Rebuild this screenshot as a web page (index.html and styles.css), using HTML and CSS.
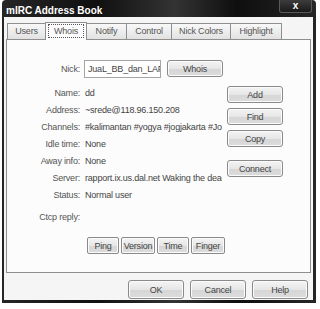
FILE: index.html
```html
<!DOCTYPE html>
<html>
<head>
    <title>mIRC Address Book</title>
    <link rel="stylesheet" href="styles.css">
</head>
<body>
    <div class="window">
        <div class="titlebar">
            <span class="title">mIRC Address Book</span>
            <div class="close-btn">x</div>
        </div>
        <div class="client">
            <div class="tabs">
                <div class="tab">Users</div>
                <div class="tab active"><span class="focus">Whois</span></div>
                <div class="tab">Notify</div>
                <div class="tab">Control</div>
                <div class="tab">Nick Colors</div>
                <div class="tab">Highlight</div>
            </div>
            <div class="panel">
                <div class="nick-row">
                    <span class="label">Nick:</span>
                    <div class="nick-input">JuaL_BB_dan_LAPTOP</div>
                    <button class="btn whois-btn">Whois</button>
                </div>
                <div class="info-area">
                    <div class="info">
                        <div class="row"><span class="label">Name:</span><span class="value">dd</span></div>
                        <div class="row"><span class="label">Address:</span><span class="value">~srede@118.96.150.208</span></div>
                        <div class="row"><span class="label">Channels:</span><span class="value">#kalimantan #yogya #jogjakarta #Jogja</span></div>
                        <div class="row"><span class="label">Idle time:</span><span class="value">None</span></div>
                        <div class="row"><span class="label">Away info:</span><span class="value">None</span></div>
                        <div class="row"><span class="label">Server:</span><span class="value">rapport.ix.us.dal.net Waking the dead</span></div>
                        <div class="row"><span class="label">Status:</span><span class="value">Normal user</span></div>
                    </div>
                    <div class="side-buttons">
                        <button class="btn">Add</button>
                        <button class="btn">Find</button>
                        <button class="btn">Copy</button>
                        <button class="btn connect-btn">Connect</button>
                    </div>
                </div>
                <div class="row ctcp-row"><span class="label">Ctcp reply:</span></div>
                <div class="ctcp-buttons">
                    <button class="btn small">Ping</button>
                    <button class="btn small">Version</button>
                    <button class="btn small">Time</button>
                    <button class="btn small">Finger</button>
                </div>
            </div>
            <div class="dialog-buttons">
                <button class="btn big">OK</button>
                <button class="btn big">Cancel</button>
                <button class="btn big">Help</button>
            </div>
        </div>
    </div>
</body>
</html>
```

FILE: styles.css
```css
body {
    margin: 0;
    background-color: #ffffff;
    font-family: "Liberation Sans", Arial, sans-serif;
    font-size: 9px;
    letter-spacing: -0.2px;
    color: #444444;
}

.window {
    width: 314px;
    height: 303px;
    margin-left: 2px;
    display: flex;
    flex-direction: column;
    background: linear-gradient(90deg, #262626 0%, #101010 30%, #333333 55%, #0e0e0e 75%, #262626 100%);
    border-radius: 4px 4px 0 0;
}

.titlebar {
    height: 17px;
    position: relative;
    display: flex;
    align-items: center;
    padding-left: 4px;
    padding-top: 3px;
    box-sizing: border-box;
}

.title {
    color: #ffffff;
    font-weight: bold;
    font-size: 10px;
    letter-spacing: 0;
}

.close-btn {
    position: absolute;
    top: 0;
    right: 4px;
    width: 31px;
    height: 12px;
    border: 1px solid #5a5a5a;
    border-top: none;
    border-radius: 0 0 3px 3px;
    background: linear-gradient(#3c3c3c, #1a1a1a);
    color: #ffffff;
    font-weight: bold;
    font-size: 10px;
    line-height: 11px;
    text-align: center;
}

.client {
    flex: 1;
    margin: 0 3px 3px 2px;
    background-color: #f5f5f5;
    display: flex;
    flex-direction: column;
}

.tabs {
    display: flex;
    margin-top: 6px;
    padding-left: 3px;
    height: 16px;
}

.tab {
    height: 16px;
    border: 1px solid #8f8f8f;
    border-bottom: none;
    margin-left: -1px;
    background: linear-gradient(#f8f8f8, #e2e2e2);
    color: #555555;
    text-align: center;
    line-height: 15px;
    box-sizing: border-box;
}

.tab:nth-child(1) { width: 39px; margin-left: 0; }
.tab:nth-child(2) { width: 42px; }
.tab:nth-child(3) { width: 41px; }
.tab:nth-child(4) { width: 46px; }
.tab:nth-child(5) { width: 60px; }
.tab:nth-child(6) { width: 52px; }

.tab.active {
    background: #fcfcfc;
    height: 18px;
    margin-top: -1px;
    position: relative;
    z-index: 1;
    padding: 1px 2px 0;
}

.focus {
    display: block;
    border: 1px dotted #555555;
    line-height: 12px;
}

.panel {
    margin-left: 2px;
    width: 305px;
    height: 234px;
    box-sizing: border-box;
    border: 1px solid #8f8f8f;
    background-color: #fcfcfc;
    padding-top: 20px;
}

.label {
    width: 73px;
    text-align: right;
    color: #555555;
    flex-shrink: 0;
}

.nick-row {
    display: flex;
    align-items: flex-start;
    height: 19px;
}

.nick-row .label {
    line-height: 19px;
}

.nick-input {
    margin-left: 4px;
    width: 77px;
    height: 18px;
    box-sizing: border-box;
    border: 1px solid #a5a5a5;
    background-color: #ffffff;
    padding: 0 3px;
    line-height: 16px;
    white-space: nowrap;
    overflow: hidden;
}

.btn {
    height: 17px;
    width: 56px;
    padding: 0;
    font-family: "Liberation Sans", Arial, sans-serif;
    font-size: 9px;
    letter-spacing: -0.2px;
    color: #444444;
    border: 1px solid #8a8a8a;
    border-radius: 3px;
    background: linear-gradient(#f4f4f4 0%, #e6e6e6 50%, #d6d6d6 51%, #dcdcdc 100%);
    box-shadow: inset 0 0 0 1px #fbfbfb;
}

.whois-btn {
    margin-left: 6px;
}

.info-area {
    display: flex;
    margin-top: 6px;
}

.info {
    width: 220px;
}

.row {
    display: flex;
    height: 17px;
    line-height: 17px;
}

.value {
    margin-left: 5px;
    width: 137px;
    white-space: nowrap;
    overflow: hidden;
}

.side-buttons {
    display: flex;
    flex-direction: column;
    gap: 5px;
    margin-top: 1px;
}

.connect-btn {
    margin-top: 8px;
}

.ctcp-row {
    margin-top: 5px;
}

.ctcp-buttons {
    display: flex;
    gap: 2px;
    margin-top: 11px;
    padding-left: 80px;
}

.btn.small {
    width: 32px;
    height: 17px;
    border-radius: 2px;
}

.btn.small:nth-child(2),
.btn.small:nth-child(4) {
    width: 34px;
}

.dialog-buttons {
    display: flex;
    justify-content: flex-end;
    gap: 6px;
    margin-top: 7px;
    padding-right: 5px;
}

.btn.big {
    height: 19px;
    width: 56px;
}
```
